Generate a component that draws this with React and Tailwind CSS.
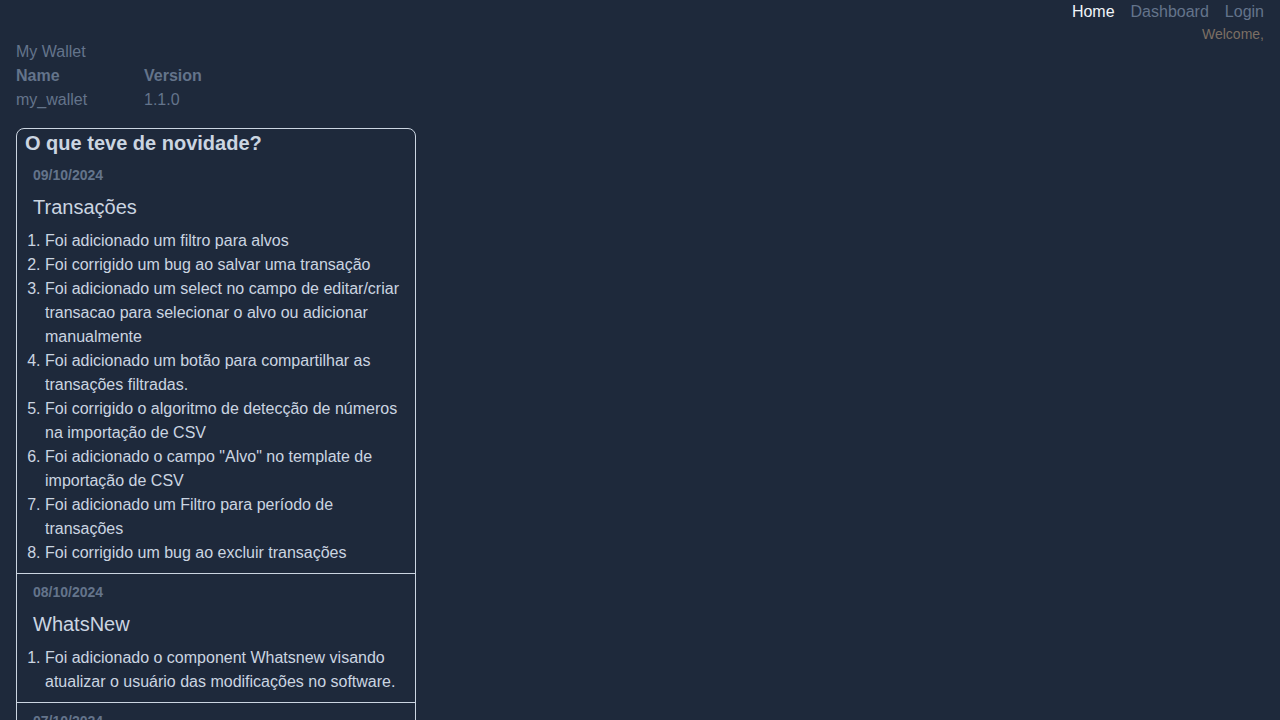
import React from 'react'

const releases = [
  {
    date: '09/10/2024',
    title: 'Transações',
    items: [
      'Foi adicionado um filtro para alvos',
      'Foi corrigido um bug ao salvar uma transação',
      'Foi adicionado um select no campo de editar/criar transacao para selecionar o alvo ou adicionar manualmente',
      'Foi adicionado um botão para compartilhar as transações filtradas.',
      'Foi corrigido o algoritmo de detecção de números na importação de CSV',
      'Foi adicionado o campo "Alvo" no template de importação de CSV',
      'Foi adicionado um Filtro para período de transações',
      'Foi corrigido um bug ao excluir transações',
    ],
  },
  {
    date: '08/10/2024',
    title: 'WhatsNew',
    items: [
      'Foi adicionado o component Whatsnew visando atualizar o usuário das modificações no software.',
    ],
  },
  {
    date: '07/10/2024',
    title: 'Transações',
    items: [
      'Foi adicionada a importação de transações via CSV',
      'Foi adicionado um template para download',
    ],
  },
]

const Release = ({ release, first }) => (
  <div className={first ? 'pt-2 pb-2' : 'border-t border-[#cbd5e1] pt-2 pb-2'}>
    <p className="ml-4 text-sm leading-5 font-bold text-[#64748b]">{release.date}</p>
    <h3 className="mt-2 ml-4 text-xl leading-7 text-[#cbd5e1]">{release.title}</h3>
    <ol className="mt-2 list-decimal pl-7 pr-2 text-base leading-6 text-[#cbd5e1]">
      {release.items.map((item, i) => (
        <li key={i}>{item}</li>
      ))}
    </ol>
  </div>
)

export default function App() {
  return (
    <div className="min-h-screen bg-[#1e293b] font-['Liberation_Sans',Arial,sans-serif]">
      {/* Header */}
      <header className="flex h-10 flex-col items-end pr-4">
        <nav className="flex h-6 items-center gap-4 text-base leading-6">
          <a className="text-[#f1f5f9]">Home</a>
          <a className="text-[#64748b]">Dashboard</a>
          <a className="text-[#64748b]">Login</a>
        </nav>
        <p className="text-sm leading-5 text-[#7c6f64]">Welcome,</p>
      </header>

      <main className="px-4">
        <p className="leading-6 text-[#64748b]">My Wallet</p>
        <div className="grid grid-cols-[128px_128px] leading-6 text-[#64748b]">
          <span className="font-bold">Name</span>
          <span className="font-bold">Version</span>
          <span>my_wallet</span>
          <span>1.1.0</span>
        </div>

        {/* What's new */}
        <section className="mt-4 w-[400px] rounded-t-lg border border-[#cbd5e1]">
          <h2 className="px-2 text-xl leading-7 font-bold text-[#cbd5e1]">O que teve de novidade?</h2>
          {releases.map((r, i) => (
            <Release key={i} release={r} first={i === 0} />
          ))}
        </section>
      </main>
    </div>
  )
}
